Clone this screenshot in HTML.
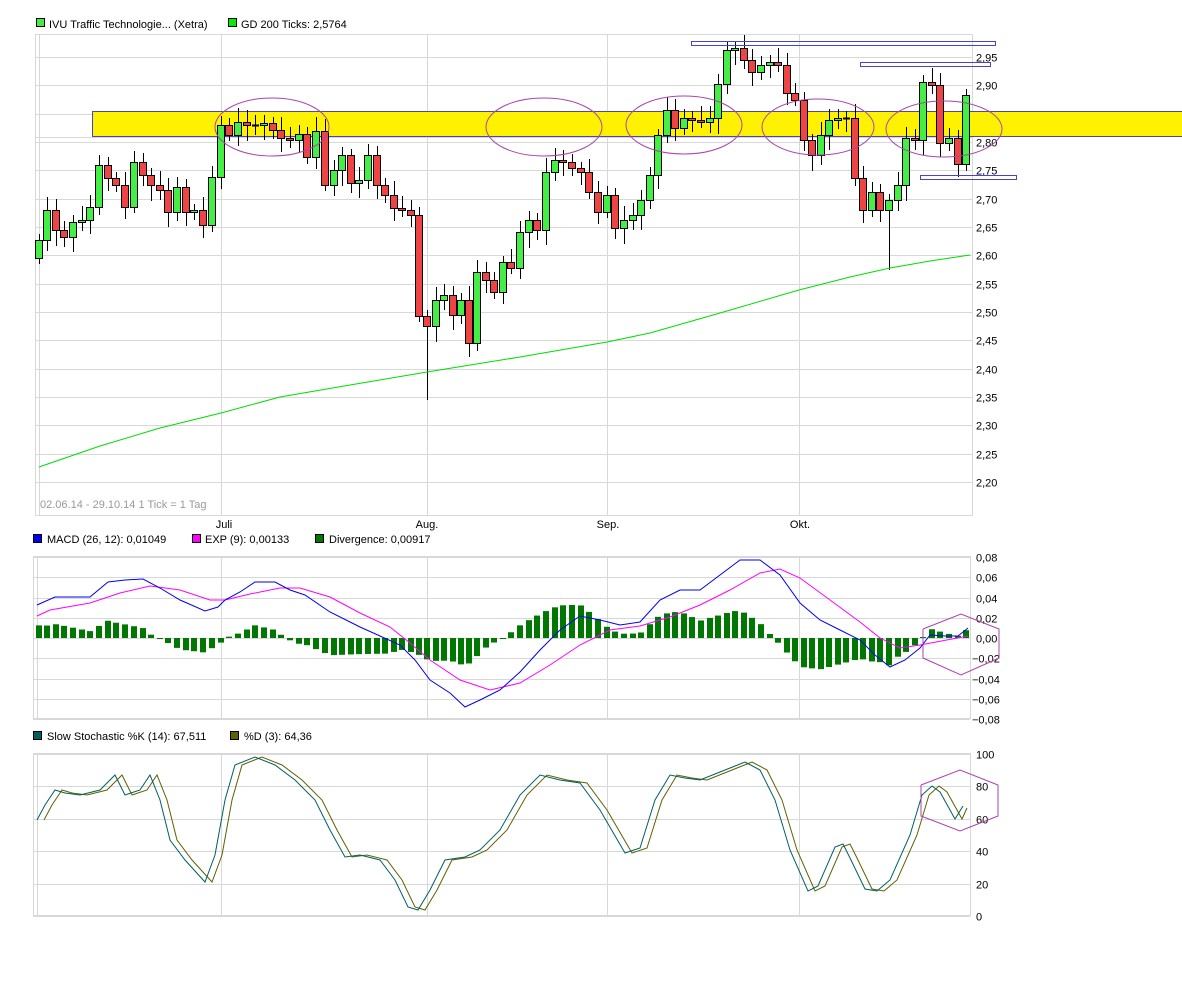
<!DOCTYPE html>
<html><head><meta charset="utf-8"><style>
body{margin:0;background:#fff;width:1182px;height:988px;overflow:hidden}
svg{display:block}
text{font-family:"Liberation Sans",sans-serif;font-size:11px;fill:#000}
</style></head><body>
<svg id="s" width="1182" height="988" xmlns="http://www.w3.org/2000/svg"></svg>
<script>
var s=document.getElementById('s'),h='';
function L(x1,y1,x2,y2,c,w){h+='<line x1="'+x1+'" y1="'+y1+'" x2="'+x2+'" y2="'+y2+'" stroke="'+c+'" stroke-width="'+(w||1)+'"/>';}
function R(x,y,w,hh,f,st){h+='<rect x="'+x+'" y="'+y+'" width="'+w+'" height="'+hh+'" fill="'+f+'"'+(st?' stroke="'+st+'"':'')+'/>';}
function T(x,y,t,c,a){h+='<text x="'+x+'" y="'+y+'"'+(c?' style="fill:'+c+'"':'')+(a?' text-anchor="'+a+'"':'')+'>'+t+'</text>';}
function P(pts,c,f){h+='<polyline points="'+pts.map(p=>p.join(',')).join(' ')+'" fill="'+(f||'none')+'" stroke="'+c+'" stroke-width="1"/>';}
var g='#d8d8d8';
R(36.5,18.5,8,8,'#44ee44','#000');T(49,28,'IVU Traffic Technologie... (Xetra)');
R(228.5,18.5,8,8,'#00ee00','#000');T(241,28,'GD 200 Ticks: 2,5764');
R(35.5,34.5,937,481,'#fff',g);
for(var i=0;i<16;i++){var y=Math.round(57+i*28.33)+.5;L(35,y,972,y,g);T(976,y+4,(2.95-i*0.05).toFixed(2).replace('.',','));}
[39.5,221.5,427.5,607.5,799.5].forEach(x=>L(x,34,x,516,g));
T(40,508,'02.06.14 - 29.10.14   1 Tick = 1 Tag','#999');
T(224,528,'Juli',0,'middle');T(427,528,'Aug.',0,'middle');T(608,528,'Sep.',0,'middle');T(800,528,'Okt.',0,'middle');
R(92.5,111.5,1090,25,'#fff200','#4444cc');
L(35,137.5,972,137.5,g);
var C=[[39,240,258],[47,210],[56,230],[64,237],[73,222],[82,220],[90,207],[99,165],[108,178],[116,185],[125,207],[134,162],[143,175],[151,185],[160,190],[168,212],[177,187],[186,212],[194,210],[203,225],[212,177],[221,125],[229,135],[238,122],[247,125],[255,125],[264,123],[273,130],[281,138],[290,140],[299,134],[307,157],[316,131],[325,185],[334,170],[342,155],[351,183],[359,180],[368,155],[377,185],[385,195],[394,208],[402,210],[411,215],[419,316],[427,326,0,400],[436,300],[444,295],[453,315],[461,300],[469,343],[477,272],[486,280],[494,292],[503,262],[511,268],[520,232],[529,220],[537,230],[546,172],[555,160],[563,162],[572,168],[581,172],[589,192],[598,212],[607,195],[615,228],[624,220],[633,215],[641,200],[650,175],[658,135],[667,110],[675,128],[684,118],[692,120],[701,122],[710,118],[718,84],[727,50],[735,48],[744,60],[752,72],[761,65],[770,62],[778,65],[787,93],[795,100],[804,140],[812,155],[821,135],[829,120],[838,118],[846,118],[855,178],[863,210],[872,192],[880,210],[889,200,0,270],[898,185],[906,138],[915,140],[923,82],[932,85],[940,143],[949,138],[958,164],[966,95]];
var prev=258;
C.forEach((c,i)=>{var x=c[0],cl=c[1],op=c[2]||prev;prev=cl;var top=Math.min(op,cl),bot=Math.max(op,cl);
var wt=top-6-((i*7)%9),wb=c[3]||(bot+6+((i*5)%11));
L(x+.5,wt,x+.5,wb,'#000');
if(bot-top<2){L(x-3,top+.5,x+4,top+.5,'#000',2);}
else R(x-3.5,top+.5,7,bot-top,cl<op?'#44ee44':'#ee4444','#000');});
P([[39,467],[100,446],[160,428],[221,413],[280,397],[350,385],[427,372],[520,357],[607,342],[650,333],[720,313],[799,290],[850,277],[890,268],[930,261],[970,255]],'#00dd00');
[[272,127,57,29],[544,127,58,29],[684,125,58,29],[818,127,56,28],[944,129,58,28]].forEach(e=>h+='<ellipse cx="'+e[0]+'" cy="'+e[1]+'" rx="'+e[2]+'" ry="'+e[3]+'" fill="none" stroke="#aa44aa"/>');
R(691.5,41.5,304,4,'none','#4444cc');R(860.5,62.5,130,4,'none','#4444cc');R(920.5,175.5,96,4,'none','#4444cc');
R(33.5,534.5,8,8,'#0000ee','#000');T(47,543,'MACD (26, 12): 0,01049');
R(192.5,534.5,8,8,'#ff00ff','#000');T(205,543,'EXP (9): 0,00133');
R(315.5,534.5,8,8,'#007700','#000');T(329,543,'Divergence: 0,00917');
R(33.5,556.5,937,162,'#fff',g);
for(i=0;i<9;i++){y=Math.round(557+i*20.25)+.5;L(33,y,970,y,g);var v=(0.08-i*0.02).toFixed(2).replace('.',',');T(976+(v[0]=='-'?-4:0),y+4,v.replace('-','\u2212'));}
[37.5,221.5,427.5,607.5,799.5].forEach(x=>L(x,556,x,719,g));
var B=[[37,605],[55,597],[90,597],[108,582],[125,580],[143,579],[160,588],[180,600],[205,611],[218,607],[225,600],[240,592],[255,582],[275,582],[290,590],[305,595],[330,612],[360,627],[380,636],[400,645],[415,660],[430,680],[450,693],[465,707],[480,700],[500,690],[520,672],[540,650],[560,630],[580,616],[600,620],[620,625],[640,622],[660,600],[680,590],[700,590],[720,575],[740,560],[760,560],[780,575],[800,603],[820,620],[840,630],[860,640],[875,655],[890,667],[905,660],[920,648],[930,635],[945,636],[958,636],[968,628]];
var M=[[37,616],[50,610],[90,603],[120,593],[150,586],[180,590],[210,600],[225,600],[250,594],[280,588],[300,588],[330,597],[360,613],[390,627],[410,643],[430,660],[460,680],[490,690],[520,683],[550,665],[580,645],[610,630],[640,626],[670,617],[700,605],[730,590],[760,573],[780,569],[800,578],[830,600],[860,622],[880,638],[900,648],[920,645],[968,636]];
function itp(a,x){for(var k=0;k<a.length-1;k++)if(x>=a[k][0]&&x<=a[k+1][0])return a[k][1]+(a[k+1][1]-a[k][1])*(x-a[k][0])/(a[k+1][0]-a[k][0]);return a[a.length-1][1];}
C.forEach(c=>{var x=c[0],d=(itp(M,x)-itp(B,x))*1.15,y0=638;if(Math.abs(d)<1)d=d<0?-1:1;R(x-3,d>0?y0-d:y0,6,Math.abs(d),'#007700');});
P(M,'#ff00ff');P(B,'#0000ee');
P([[923,629],[961,614],[999,629],[999,658],[961,675],[923,658],[923,629]],'#aa44aa');
R(33.5,731.5,8,8,'#006060','#000');T(47,740,'Slow Stochastic %K (14): 67,511');
R(230.5,731.5,8,8,'#606000','#000');T(244,740,'%D (3): 64,36');
R(33.5,753.5,937,162,'#fff',g);
for(i=0;i<6;i++){y=Math.round(754+i*32.4)+.5;L(33,y,970,y,g);T(976,y+4,String(100-i*20));}
[37.5,221.5,427.5,607.5,799.5].forEach(x=>L(x,753,x,916,g));
var K=[[37,820],[45,805],[55,790],[65,793],[80,795],[100,790],[115,775],[125,795],[140,790],[150,775],[160,800],[170,840],[185,860],[205,882],[215,855],[225,800],[235,765],[255,757],[275,765],[295,780],[315,800],[330,830],[345,857],[360,855],[380,860],[395,880],[408,907],[418,910],[430,890],[445,860],[465,857],[480,850],[500,830],[520,795],[540,775],[560,780],[580,783],[600,810],[625,853],[640,848],[655,800],[670,775],[685,778],[700,780],[720,772],[745,762],[760,770],[775,800],[790,850],[808,891],[818,886],[835,847],[843,844],[850,858],[865,889],[877,891],[890,880],[910,835],[922,795],[932,786],[940,792],[955,819],[963,806]];
var D=K.map(p=>[p[0]+7,p[1]]);D[D.length-1]=[967,808];
P(D,'#606000');P(K,'#006060');
P([[921,785],[960,770],[998,785],[998,816],[960,831],[921,816],[921,785]],'#aa44aa');
s.innerHTML=h;
</script>
</body></html>
